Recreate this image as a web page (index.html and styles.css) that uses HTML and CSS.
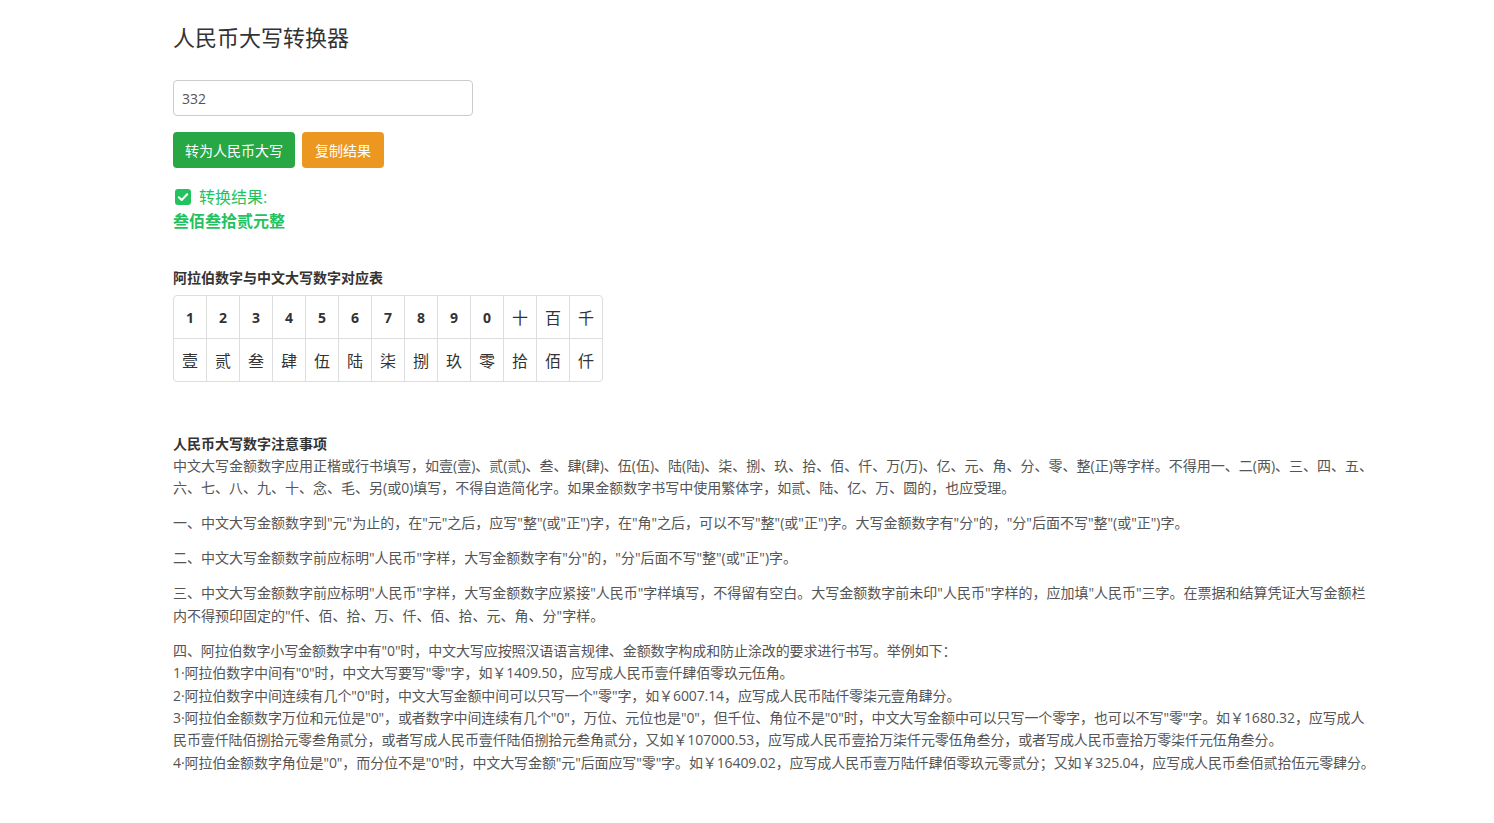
FILE: index.html
```html
<!DOCTYPE html>
<html lang="zh-CN">
<head>
    <meta charset="UTF-8">
    <meta name="viewport" content="width=device-width, initial-scale=1.0">
    <title>人民币大写转换器</title>
    <link rel="stylesheet" href="styles.css">
</head>
<body>
    <div class="container">
        <h1 class="title">人民币大写转换器</h1>

        <input class="money-input" type="text" value="332">

        <div class="actions">
            <button class="btn btn-green">转为人民币大写</button>
            <button class="btn btn-orange">复制结果</button>
        </div>

        <div class="result">
            <div class="result-label">
                <svg class="check" width="16" height="16" viewBox="0 0 16 16">
                    <rect width="16" height="16" rx="3" fill="#22c35e"/>
                    <path d="M3.8 8.2 L6.7 11 L12.2 5.2" stroke="#fff" stroke-width="2" fill="none" stroke-linecap="round" stroke-linejoin="round"/>
                </svg>
                <span>转换结果:</span>
            </div>
            <div class="result-text">叁佰叁拾贰元整</div>
        </div>

        <h2 class="section-title">阿拉伯数字与中文大写数字对应表</h2>
        <table class="num-table">
            <tr class="head-row">
                <td>1</td><td>2</td><td>3</td><td>4</td><td>5</td><td>6</td><td>7</td><td>8</td><td>9</td><td>0</td>
                <td class="cn">十</td><td class="cn">百</td><td class="cn">千</td>
            </tr>
            <tr>
                <td>壹</td><td>贰</td><td>叁</td><td>肆</td><td>伍</td><td>陆</td><td>柒</td><td>捌</td><td>玖</td><td>零</td>
                <td>拾</td><td>佰</td><td>仟</td>
            </tr>
        </table>

        <div class="notes">
            <h3>人民币大写数字注意事项</h3>
            <p>中文大写金额数字应用正楷或行书填写，如壹(壹)、贰(贰)、叁、肆(肆)、伍(伍)、陆(陆)、柒、捌、玖、拾、佰、仟、万(万)、亿、元、角、分、零、整(正)等字样。不得用一、二(两)、三、四、五、六、七、八、九、十、念、毛、另(或0)填写，不得自造简化字。如果金额数字书写中使用繁体字，如贰、陆、亿、万、圆的，也应受理。</p>
            <p>一、中文大写金额数字到"元"为止的，在"元"之后，应写"整"(或"正")字，在"角"之后，可以不写"整"(或"正")字。大写金额数字有"分"的，"分"后面不写"整"(或"正")字。</p>
            <p>二、中文大写金额数字前应标明"人民币"字样，大写金额数字有"分"的，"分"后面不写"整"(或"正")字。</p>
            <p>三、中文大写金额数字前应标明"人民币"字样，大写金额数字应紧接"人民币"字样填写，不得留有空白。大写金额数字前未印"人民币"字样的，应加填"人民币"三字。在票据和结算凭证大写金额栏内不得预印固定的"仟、佰、拾、万、仟、佰、拾、元、角、分"字样。</p>
            <p class="examples">四、阿拉伯数字小写金额数字中有"0"时，中文大写应按照汉语语言规律、金额数字构成和防止涂改的要求进行书写。举例如下：<br>
            1·阿拉伯数字中间有"0"时，中文大写要写"零"字，如￥1409.50，应写成人民币壹仟肆佰零玖元伍角。<br>
            2·阿拉伯数字中间连续有几个"0"时，中文大写金额中间可以只写一个"零"字，如￥6007.14，应写成人民币陆仟零柒元壹角肆分。<br>
            3·阿拉伯金额数字万位和元位是"0"，或者数字中间连续有几个"0"，万位、元位也是"0"，但千位、角位不是"0"时，中文大写金额中可以只写一个零字，也可以不写"零"字。如￥1680.32，应写成人民币壹仟陆佰捌拾元零叁角贰分，或者写成人民币壹仟陆佰捌拾元叁角贰分，又如￥107000.53，应写成人民币壹拾万柒仟元零伍角叁分，或者写成人民币壹拾万零柒仟元伍角叁分。<br>
            4·阿拉伯金额数字角位是"0"，而分位不是"0"时，中文大写金额"元"后面应写"零"字。如￥16409.02，应写成人民币壹万陆仟肆佰零玖元零贰分；又如￥325.04，应写成人民币叁佰贰拾伍元零肆分。</p>
        </div>
    </div>
</body>
</html>
```

FILE: styles.css
```css
body {
    margin: 0;
    padding: 0;
    font-family: "Open Sans", "Noto Sans CJK SC", sans-serif;
    font-size: 14px;
    color: #555;
    background-color: #fff;
}

.container {
    width: 1204px;
    margin: 0 0 0 173px;
    padding-top: 22px;
    padding-bottom: 40px;
}

.title {
    margin: 0;
    font-size: 22px;
    font-weight: normal;
    line-height: 30px;
    color: #333;
}

.money-input {
    display: block;
    box-sizing: border-box;
    margin-top: 28px;
    width: 300px;
    height: 36px;
    padding: 0 8px;
    border: 1px solid #ccc;
    border-radius: 4px;
    font-family: inherit;
    font-size: 14px;
    color: #555;
}

.actions {
    display: flex;
    gap: 7px;
    margin-top: 16px;
}

.btn {
    height: 36px;
    padding: 0 12px;
    border: none;
    border-radius: 4px;
    color: #fff;
    font-family: inherit;
    font-size: 14px;
    cursor: pointer;
}

.btn-green {
    background-color: #28a745;
}

.btn-orange {
    background-color: #ec971f;
    padding: 0 13px;
}

.result {
    margin-top: 18px;
    color: #22c35e;
}

.result-label {
    display: flex;
    align-items: center;
    gap: 8px;
    padding-left: 2px;
    font-size: 16px;
    line-height: 22px;
}

.result-text {
    margin-top: 2px;
    font-size: 16px;
    font-weight: bold;
    line-height: 22px;
}

.section-title {
    margin: 35px 0 6px;
    font-size: 14px;
    font-weight: bold;
    line-height: 22px;
    color: #333;
}

.num-table {
    border-collapse: separate;
    border-spacing: 0;
    border: 1px solid #ddd;
    border-radius: 4px;
}

.num-table td {
    width: 32px;
    height: 42px;
    padding: 0;
    text-align: center;
    font-size: 16px;
    color: #333;
    border-right: 1px solid #ddd;
}

.num-table td:last-child {
    border-right: none;
}

.head-row td {
    border-bottom: 1px solid #ddd;
    font-size: 14px;
    font-weight: bold;
}

.head-row td.cn {
    font-size: 16px;
    font-weight: normal;
}

.notes {
    margin-top: 51px;
}

.notes h3 {
    margin: 0;
    font-size: 14px;
    font-weight: bold;
    line-height: 22px;
    color: #333;
}

.notes p {
    margin: 0 0 12.6px;
    line-height: 22.4px;
}

.notes .examples {
    letter-spacing: -0.1px;
}
```
